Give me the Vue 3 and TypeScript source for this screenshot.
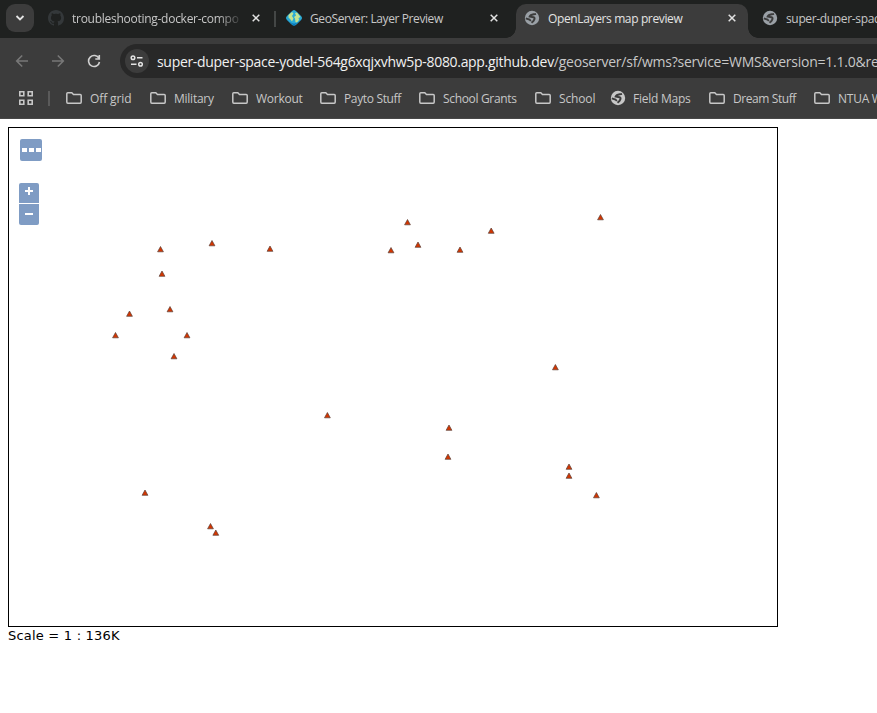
<script setup lang="ts">
interface Tab { title: string; icon: 'github' | 'geo' | 'globe'; active?: boolean; cls: string }
interface Bookmark { name: string; icon: 'folder' | 'globe'; cls: string }

const tabs: Tab[] = [
  { title: 'troubleshooting-docker-compo', icon: 'github', cls: 't1' },
  { title: 'GeoServer: Layer Preview', icon: 'geo', cls: 't2' },
  { title: 'OpenLayers map preview', icon: 'globe', active: true, cls: 't3' },
  { title: 'super-duper-space-yodel', icon: 'globe', cls: 't4' },
]
const bookmarks: Bookmark[] = [
  { name: 'Off grid', icon: 'folder', cls: 'b1' },
  { name: 'Military', icon: 'folder', cls: 'b2' },
  { name: 'Workout', icon: 'folder', cls: 'b3' },
  { name: 'Payto Stuff', icon: 'folder', cls: 'b4' },
  { name: 'School Grants', icon: 'folder', cls: 'b5' },
  { name: 'School', icon: 'folder', cls: 'b6' },
  { name: 'Field Maps', icon: 'globe', cls: 'b7' },
  { name: 'Dream Stuff', icon: 'folder', cls: 'b8' },
  { name: 'NTUA Work', icon: 'folder', cls: 'b9' },
]
/* Feature positions in map viewport coordinates */
const points: [number, number][] = [
  [151.5, 121.5], [203, 115.5], [261, 121], [153, 146], [120.5, 186], [161, 181.5],
  [106.5, 207.5], [178, 207.5], [165, 228.5], [398.5, 94.5], [409, 117], [382, 122.5],
  [451, 122], [482.2, 103], [591.5, 89.5], [546.4, 239.5], [318.4, 287.5], [440, 300],
  [439, 329], [560, 339], [560, 348], [587.4, 367.5], [136, 365], [201.5, 398.5], [206.8, 405],
]
</script>

<template>
  <div class="window">
    <header>
      <div class="tabstrip">
        <button class="search" aria-label="Search tabs">
          <svg width="10" height="8" viewBox="0 0 10 8"><path d="M1.5 2 5 5.5 8.500 2" /></svg>
        </button>
        <div v-for="t in tabs" :key="t.title" class="tab" :class="[t.cls, { active: t.active }]">
          <svg v-if="t.icon === 'github'" class="fav github" viewBox="0 0 16 16"><path d="M8 0C3.580 0 0 3.580 0 8c0 3.540 2.290 6.530 5.470 7.590.4.070.550-.170.550-.380v-1.490c-2.010.370-2.530-.490-2.690-.940-.090-.230-.480-.940-.820-1.130-.280-.150-.680-.520-.010-.530.630-.010 1.080.580 1.230.820.720 1.210 1.870.870 2.330.660.070-.520.280-.870.510-1.070-1.780-.200-3.640-.890-3.640-3.950 0-.870.310-1.590.820-2.150-.080-.200-.360-1.020.080-2.120 0 0 .670-.210 2.200.820.640-.180 1.320-.270 2-.270s1.360.090 2 .270c1.530-1.040 2.200-.820 2.200-.820.440 1.100.160 1.920.080 2.120.510.560.820 1.270.820 2.150 0 3.070-1.870 3.750-3.650 3.950.290.250.540.730.540 1.480v2.200c0 .210.150.460.550.380A8 8 0 0 0 16 8c0-4.420-3.580-8-8-8z" /></svg>
          <svg v-else-if="t.icon === 'geo'" class="fav" viewBox="0 0 16 16">
            <path d="M8 0q1 0 3 2l4 4q2 2 0 4l-4 4q-3 3-6 0l-4-4q-2-2 0-4l4-4q2-2 3-2z" fill="#2aabd6" />
            <path d="M1 9.500 8 16l7-6.500-1 1.500-5 2.500H7L2 11z" fill="#0878bc" />
            <path d="M2.500 5 6 2l1.500 1.500L6 6l1.500 2.500L6 11.500 4.500 9.500 2.500 7.500zM9 3l2-.5 3.500 4.500-2 1 .5 2-2 2.500-1.500-.5-.5-3.500L8 7l2-1.500z" fill="#c3e391" />
          </svg>
          <svg v-else class="fav globe" viewBox="0 0 16 16"><circle cx="8" cy="8" r="7.200" /><path d="M12 3.800C9.500 4.600 6.500 4 5.600 6.600L9.500 7.200C11.500 8 10.500 10.500 7.500 12.800M1.800 8.300 5.500 9.500 6.800 11" /></svg>
          <span class="title">{{ t.title }}</span>
          <svg class="close" width="8" height="8" viewBox="0 0 8 8"><path d="m.7.700 6.600 6.600M7.300.700.700 7.300" /></svg>
        </div>
      </div>

      <div class="toolbar">
        <svg class="nav dim" viewBox="0 0 14 14"><path d="M13 7H2M7.200 1.500 1.700 7l5.500 5.500" /></svg>
        <svg class="nav dim" viewBox="0 0 14 14"><path d="M1 7h11M6.800 1.500 12.300 7l-5.500 5.500" /></svg>
        <svg class="nav" viewBox="0 0 14 14"><path d="M12 4.500A5.500 5.500 0 1 0 12.500 8M12.300 1v4H8.300" /></svg>
        <div class="omnibox">
          <span class="site"><svg width="14" height="12" viewBox="0 0 14 12"><circle cx="3" cy="2.700" r="1.800" /><path d="M7 2.700h5.500M1 9.300h5.500" /><circle cx="10.500" cy="9.300" r="1.800" /></svg></span>
          <span class="url"><b>super-duper-space-yodel-564g6xqjxvhw5p-8080.app.github.dev</b><i>/geoserver/sf/wms?service=WMS&amp;version=1.1.0&amp;re</i></span>
        </div>
      </div>

      <nav class="bookmarks">
        <svg class="apps" width="14" height="14" viewBox="0 0 14 14"><path d="M.8.800h4v4h-4zM9.200.800h4v4h-4zM.8 9.200h4v4h-4zM9.200 9.200h4v4h-4z" /></svg>
        <span class="divider" />
        <div v-for="b in bookmarks" :key="b.name" class="bookmark" :class="b.cls">
          <svg v-if="b.icon === 'folder'" class="folder" viewBox="0 0 16 12"><path d="M.8 10V1.800q0-1 1-1h4l1.700 1.700h6.700q1 0 1 1V10q0 1.200-1 1.200H1.800q-1 0-1-1.200z" /></svg>
          <svg v-else class="bglobe globe" viewBox="0 0 16 16"><circle cx="8" cy="8" r="7.200" /><path d="M12 3.800C9.500 4.600 6.500 4 5.600 6.600L9.500 7.200C11.500 8 10.500 10.500 7.500 12.800M1.800 8.300 5.500 9.500 6.800 11" /></svg>
          <span>{{ b.name }}</span>
        </div>
      </nav>
    </header>

    <main>
      <div class="map">
        <svg class="features" width="768" height="498" viewBox="0 0 768 498">
          <path v-for="(p, i) in points" :key="i" :transform="`translate(${p[0]} ${p[1]})`" d="M0-3 2.900 2.300H-2.900Z" />
        </svg>
        <div class="controls">
          <button class="options" aria-label="Options"><i /><i /><i /></button>
          <div class="zoom">
            <button aria-label="Zoom in"><svg width="8" height="8" viewBox="0 0 8 8"><path d="M0 4h8M4 0v8" /></svg></button>
            <button aria-label="Zoom out"><svg width="8" height="8" viewBox="0 0 8 8"><path d="M0 4h8" /></svg></button>
          </div>
        </div>
      </div>
      <div class="scale">Scale = 1 : 136K</div>
    </main>
  </div>
</template>

<style>
body { background: #fff; overflow: hidden; }
</style>

<style scoped>
.window { width: 877px; height: 713px; overflow: hidden; font-family: "Open Sans", "Noto Sans", sans-serif; font-size: 12px; }
button { border: 0; padding: 0; margin: 0; display: flex; align-items: center; justify-content: center; }
svg { display: block; flex: none; }
header { height: 119px; overflow: hidden; background: #3c3c3c; }
.tabstrip { height: 38px; background: #1f2120; display: flex; box-sizing: border-box; padding-left: 6px; }
.search { width: 28px; height: 28px; margin-top: 4px; border-radius: 9px; background: #3c3c3c; flex: none; }
.search path { fill: none; stroke: #e3e3e3; stroke-width: 1.800; }
.tab { position: relative; display: flex; align-items: center; height: 34px; margin-top: 4px; padding: 0 12px 6px 8px; box-sizing: border-box; color: #c7c7c7; flex: none; width: 238px; }
.t1 { margin-left: 6px; }
.t1::after { content: ""; position: absolute; right: 2px; top: 7px; width: 2px; height: 16px; background: #444746; }
.tab.active { background: #3c3c3c; border-radius: 10px 10px 0 0; width: 232px; margin-right: 6px; color: #e3e3e3; }
.active::before, .active::after { content: ""; position: absolute; bottom: 0; width: 10px; height: 10px; }
.active::before { left: -10px; background: radial-gradient(circle at 0 0, transparent 9.500px, #3c3c3c 10px); }
.active::after { right: -10px; background: radial-gradient(circle at 100% 0, transparent 9.500px, #3c3c3c 10px); }
.fav { width: 16px; height: 16px; }
.github { fill: #34383a; }
.globe circle { fill: #9aa0a6; }
.globe path { fill: none; stroke: #3c3c3c; stroke-width: 1.900; }
.title { margin-left: 8px; width: 168px; overflow: hidden; white-space: nowrap; line-height: 20px; letter-spacing: -.4px; padding-top: 2px; }
.t1 .title { mask-image: linear-gradient(to right, #000 145px, transparent 172px); letter-spacing: -.27px; }
.t3 .title { letter-spacing: -.37px; }
.t4 .title { letter-spacing: -.35px; }
.close { margin-left: 12px; }
.active .close { margin-left: 12px; }
.close path { fill: none; stroke: #e3e3e3; stroke-width: 1.500; }
.toolbar { height: 40px; padding: 6px 0 0 15px; box-sizing: border-box; display: flex; align-items: center; }
.nav { width: 14px; height: 14px; margin-right: 22px; }
.nav path { fill: none; stroke: #d0d0d0; stroke-width: 1.600; }
.nav.dim path { stroke: #777; }
.omnibox { height: 34px; flex: 1; min-width: 0; margin-left: -3px; border-radius: 17px 0 0 17px; background: #282828; display: flex; align-items: center; overflow: hidden; padding-left: 5px; }
.site { width: 24px; height: 24px; border-radius: 50%; background: #3c3c3c; display: flex; align-items: center; justify-content: center; flex: none; }
.site svg { fill: none; stroke: #e3e3e3; stroke-width: 1.500; }
.url { margin-left: 8px; white-space: nowrap; font-size: 14px; line-height: 20px; padding-top: 1px; }
.url b { font-weight: 400; color: #f1f1f1; letter-spacing: -.31px; }
.url i { font-style: normal; color: #c7c7c7; letter-spacing: -.24px; }
.bookmarks { height: 41px; display: flex; align-items: center; padding-left: 19px; border-bottom: 1px solid #474747; box-sizing: border-box; color: #c7c7c7; }
.apps path { fill: none; stroke: #c7c7c7; stroke-width: 1.600; }
.divider { width: 2px; height: 15px; background: #5a5a5a; margin: 0 16px 0 15px; flex: none; }
.bookmark { display: flex; align-items: center; gap: 8px; flex: none; white-space: nowrap; letter-spacing: -.25px; }
.b1 { width: 84px; letter-spacing: -.12px; } .b2 { width: 82px; } .b3 { width: 88px; } .b4 { width: 99px; letter-spacing: -.35px; } .b5 { width: 116px; letter-spacing: -.33px; }
.b6 { width: 75px; letter-spacing: -.15px; } .b7 { width: 99px; gap: 7px; } .b8 { width: 105px; letter-spacing: -.42px; } .b9 { width: 100px; }
.folder { width: 16px; height: 12px; }
.folder path { fill: none; stroke: #c7c7c7; stroke-width: 1.500; }
.bglobe { width: 16px; height: 16px; }
.bglobe circle { fill: #c7c7c7; }
main { padding: 8px; }
.map { position: relative; width: 768px; height: 498px; border: 1px solid #000; }
.features { position: absolute; inset: 0; }
.features path { fill: #d43500; stroke: #5a4038; stroke-width: .7; }
.controls { position: relative; padding: 11px 0 0 10px; display: flex; flex-direction: column; gap: 22px; }
.options { width: 22px; height: 22px; margin-left: 1px; border-radius: 2px; background: #7f9cc4; gap: 2px; }
.options i { width: 5px; height: 4px; background: #fff; }
.zoom { display: flex; flex-direction: column; gap: 1px; }
.zoom button { width: 20px; height: 20px; background: #7f9cc4; border-radius: 2px 2px 0 0; padding-bottom: 4px; box-sizing: border-box; }
.zoom button + button { height: 21px; border-radius: 0 0 2px 2px; padding-bottom: 1px; }
.zoom path { fill: none; stroke: #fff; stroke-width: 2; }
.scale { font: 13px/16px "DejaVu Sans", sans-serif; color: #000; letter-spacing: .21px; padding-top: 1px; }
</style>
